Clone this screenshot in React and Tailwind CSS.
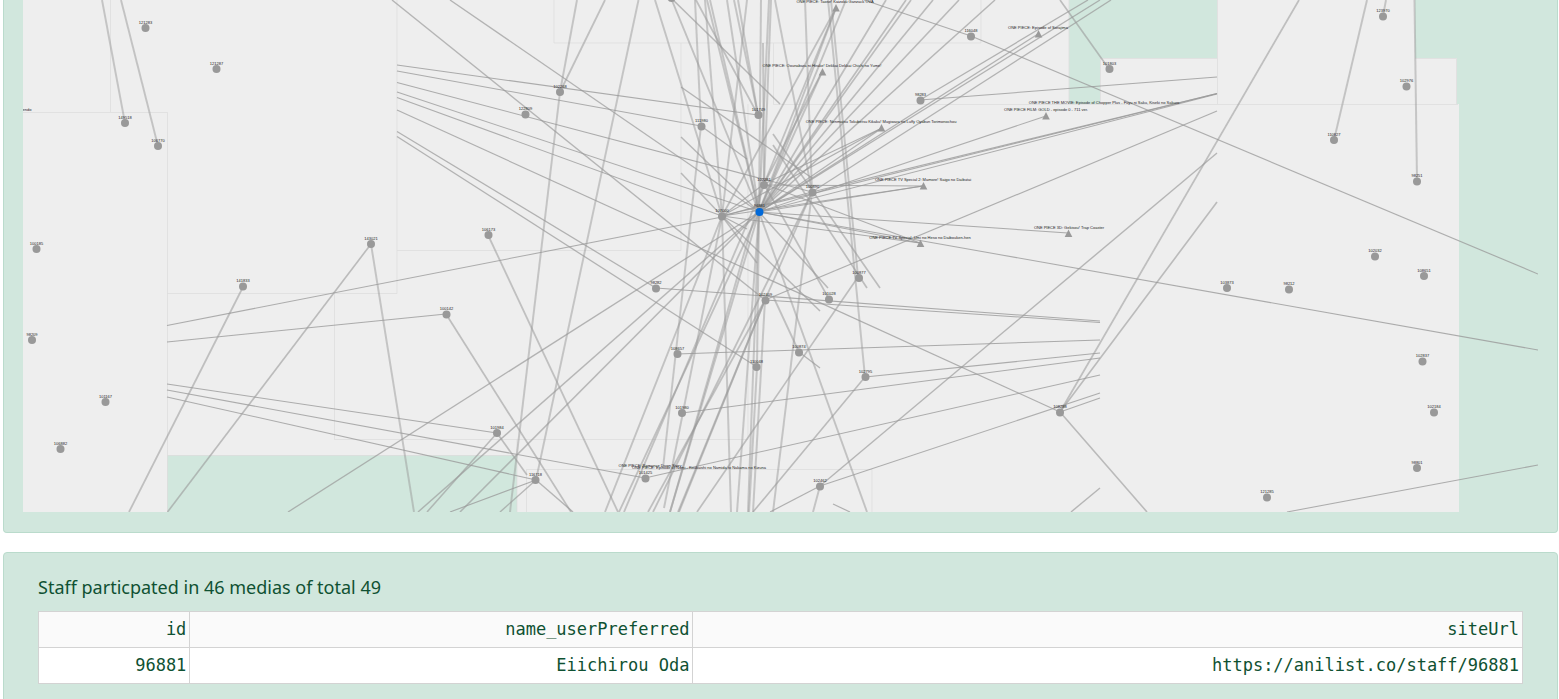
import React from "react";

// Cluster panels: [x, y, width, height]
const areas = [
  [23, 0, 1046, 455],
  [23, 112, 144, 400],
  [517, 439, 942, 73],
  [1100, 58, 357, 60],
  [1217, 0, 198, 105],
  [773, 104, 686, 408],
];

const outlines = [
  "M110.5 0V112", "M23 112.5H167.5V512", "M397 0V293.5H167", "M397 250.5H681V43",
  "M554 0V43H981V0", "M334.5 293V439.5H748V104", "M517 439V512", "M167 455.5H517",
  "M526.5 512V469.5H872V512", "M773.5 43V104.5H1458", "M1217.5 0V104", "M1100 58.5H1217",
  "M1415 58.5H1456.5V104", "M1069 0V104", "M1100.5 58V104",
];

const edges = [
  [102, 0, 125, 123], [121, 0, 158, 146],
  [392, 0, 765, 300], [450, 0, 759, 212],
  [397, 65, 758, 115], [397, 71, 701, 126], [397, 82.5, 812, 192], [397, 92, 759, 212],
  [397, 97.5, 722, 216], [397, 110, 1060, 412], [397, 131.5, 656, 288], [397, 136.5, 757, 367],
  [577, 0, 560, 92], [605, 0, 560, 92], [560, 92, 510, 512], [638.5, 0, 536, 480],
  [655, 0, 722, 216], [671, -2, 780, 104], [671, -2, 759, 212], [488, 235, 618, 512],
  [167, 325.5, 722, 217], [773, 134, 880, 288], [773, 145, 867, 288],
  [681, 87, 812, 178], [681, 137, 759, 212], [681, 173, 722, 216],
  [701, 126, 747, 159], [722, 216, 747, 229], [722, 216, 820, 311], [759, 212, 828, 288],
  [722, 216, 757, 263], [759, 212, 867, 512], [773, 296, 799, 352], [799, 352, 820, 368],
  [764, 184, 829, 299], [812, 192, 773, 512], [828, 0, 865, 377], [831, 0, 858, 277],
  [775, 0, 812, 192], [805, 0, 812, 192], [771, 0, 764, 184], [769, 0, 759, 212],
  [761, 0, 759, 212], [763, 43, 764, 184], [695, 0, 701, 126], [696, 0, 758, 115],
  [705, 0, 722, 216], [707, 0, 759, 212], [710, 0, 759, 212], [727, 0, 759, 212],
  [734, 0, 758, 115], [738, 0, 758, 115], [747, 0, 722, 216], [701, 126, 663, 468],
  [836, 8, 759, 212], [836, 8, 722, 216], [836, 8, 764, 184], [822, 72, 759, 212],
  [822, 72, 764, 184], [846, 0, 759, 212], [886, 0, 759, 212], [906, 0, 759, 212],
  [911, 0, 759, 212], [933, 0, 759, 212], [959, 0, 759, 212], [995, 0, 759, 212],
  [1088, 0, 920, 100], [1100, 0, 759, 212], [1111, 0, 812, 192], [1038, 34, 759, 212],
  [882, 128, 759, 212], [882, 128, 722, 216], [882, 128, 764, 184],
  [923, 186, 764, 185], [923, 186, 759, 212], [923, 186, 722, 216],
  [920, 243, 759, 212], [920, 243, 764, 184], [920, 243, 722, 216],
  [1068, 233, 759, 212], [1046, 116, 759, 212],
  [1217, 94, 759, 212], [1217, 93.5, 722, 216], [1217, 93.5, 812, 192],
  [1217, 111, 765, 300], [1217, 77, 920, 100], [1217, 153, 820, 486],
  [1217, 202, 1060, 412], [1299, 0, 1060, 412], [864, 0, 971, 36], [971, 36, 1538, 274],
  [1060, 0, 1109, 69], [759, 212, 1538, 350],
  [1367, 0, 1334, 140], [1414.5, 0, 1417, 181], [1386, 0, 1383, 16],
  [1287, 512, 1538, 465], [1100, 321, 656, 288], [1100, 322.5, 765, 300],
  [1100, 340, 677, 354], [1100, 353, 865, 377], [1100, 358, 682, 413],
  [1100, 375, 645, 478], [1100, 393, 820, 486], [1100, 398, 1060, 412],
  [1100, 488, 1071, 512], [1060, 412, 1147, 512],
  [243, 287, 129, 512], [371, 244, 167.5, 512], [371, 244, 414, 512],
  [167, 342, 446, 314], [167, 384, 497, 433], [167, 390, 645, 478], [167, 397, 536, 480],
  [288, 512, 759, 212], [418, 512, 759, 212], [427, 512, 497, 433], [450, 512, 536, 480],
  [460, 512, 759, 212], [500, 512, 536, 480], [536, 480, 573, 512], [446, 314, 571, 512],
  [497, 433, 527, 475], [605, 512, 722, 216], [619, 512, 759, 212], [624, 512, 764, 184],
  [648, 512, 765, 300], [653, 512, 812, 192], [664, 508, 722, 216], [670, 512, 759, 212],
  [670, 512, 764, 184], [678, 512, 765, 300], [679, 512, 765, 300], [812, 192, 765, 300],
  [697, 512, 858, 277], [753, 512, 865, 377], [770, 512, 820, 486], [813, 512, 820, 486],
  [833, 504, 850, 512], [722, 216, 731, 512], [759, 212, 737, 512], [759, 212, 748, 512],
  [757, 367, 749, 512], [765, 300, 753, 512], [759, 212, 757, 367],
  [722, 216, 764, 184], [722, 216, 812, 192],
];

const nodes = [
  [145.5, 28, "121283"], [216.5, 69, "121287"], [125, 123, "149518"], [158, 146, "106770"],
  [36.5, 249, "100185"], [371, 244, "143021"], [243, 286.5, "141833"], [32, 340, "98209"],
  [105.5, 402, "101167"], [60.5, 449, "106882"], [560, 92, "102268"], [525.5, 114.5, "122809"],
  [488.5, 235, "106173"], [671.5, -2, ""], [446.5, 314.5, "100142"], [656, 288.5, "98282"],
  [497, 433, "101984"], [535.5, 480, "116718"], [645.5, 478.5, "101425"], [677.5, 354, "108657"],
  [682, 413, "101980"], [758.5, 115, "101749"], [701.5, 126.5, "111980"], [764, 185, "102281"],
  [812.5, 192.5, "100890"], [722, 216.5, "107000"], [765.5, 300.5, "102409"],
  [829, 299.5, "101028"], [859, 278, "100877"], [799, 352.5, "100874"], [756.5, 367, "110048"],
  [865.5, 377, "102795"], [820, 486.5, "102462"], [971, 36.5, "116048"], [920.5, 100.5, "98283"],
  [1109.5, 69, "101803"], [1060, 412.5, "108288"], [1383, 16.5, "123970"],
  [1406.5, 86.5, "102976"], [1334, 140, "110827"], [1417, 181.5, "98251"],
  [1375, 256.5, "102032"], [1424, 276, "108651"], [1227, 288, "103873"], [1289, 289.5, "98212"],
  [1422.5, 361.5, "102837"], [1434, 412.5, "102184"], [1417, 468, "98801"], [1267, 497.5, "121285"],
];

// Anime titles: [x, y, label, label center]
const titles = [
  [836, 8, "ONE PIECE: Taose! Kaizoku Ganzack OVA", 835],
  [822.5, 72, "ONE PIECE: Oounabara ni Hirake! Dekkai Dekkai Chichi no Yume!", 822],
  [881.5, 128, "ONE PIECE: Nenmatsu Tokubetsu Kikaku! Mugiwara no Luffy Oyabun Torimonochou", 881],
  [1038.5, 34, "ONE PIECE: Episode of Sorajima", 1038],
  [1046, 116, "ONE PIECE FILM: GOLD - episode 0 - 711 ver.", 1046],
  [923.5, 186, "ONE PIECE TV Special 2: Mamore! Saigo no Daibutai", 923],
  [920.5, 243.5, "ONE PIECE TV Special: Umi no Heso no Daibouken-hen", 920],
  [1068.5, 233.5, "ONE PIECE 3D: Gekisou! Trap Coaster", 1069],
];

const looseLabels = [
  [1104, 104, "ONE PIECE THE MOVIE: Episode of Chopper Plus - Fuyu ni Saku, Kiseki no Sakura"],
  [699, 469, "ONE PIECE: Episode of Nami - Koukaishi no Namida to Nakama no Kizuna"],
  [650, 467, "ONE PIECE: Romance Dawn Story"],
  [27, 111, "endo"],
];

function Edge({ line }) {
  const [x1, y1, x2, y2] = line;
  const steep = Math.abs(y2 - y1) / Math.hypot(x2 - x1, y2 - y1);
  return (
    <line
      x1={x1} y1={y1} x2={x2} y2={y2}
      stroke="#999"
      strokeWidth={1 + steep * steep}
      strokeOpacity={0.8 - 0.32 * steep * steep}
    />
  );
}

function Network() {
  return (
    <svg viewBox="23 0 1515 512" className="block h-auto w-full" role="img" aria-label="Staff and media network">
      {areas.map(([x, y, w, h], i) => (
        <rect key={i} x={x} y={y} width={w} height={h} fill="#eee" />
      ))}
      <path d={outlines.join("")} fill="none" stroke="#ddd" strokeOpacity="0.8" />
      {edges.map((line, i) => <Edge key={i} line={line} />)}
      {nodes.map(([x, y], i) => <circle key={i} cx={x} cy={y} r="4" fill="#999" />)}
      {titles.map(([x, y], i) => (
        <path key={i} d={`M${x} ${y - 4}l3.8 7.5h-7.6z`} fill="#999" />
      ))}
      <circle cx="759.5" cy="212" r="4" fill="#0169d9" />
      <g className="font-['Liberation_Sans',sans-serif] text-[4px]" fill="#222" textAnchor="middle">
        {nodes.map(([x, y, label], i) => <text key={i} x={x} y={y - 4.5}>{label}</text>)}
        {titles.map(([, y, label, cx], i) => <text key={i} x={cx} y={y - 5}>{label}</text>)}
        {looseLabels.map(([x, y, label]) => <text key={label} x={x} y={y}>{label}</text>)}
        <text x="759.5" y="207">96881</text>
      </g>
    </svg>
  );
}

const columns = ["id", "name_userPreferred", "siteUrl"];
const rows = [["96881", "Eiichirou Oda", "https://anilist.co/staff/96881"]];

export default function App() {
  return (
    <main className="h-screen overflow-hidden bg-white pl-[3px] pr-px text-[#0f5132]">
      <section className="rounded-b border border-t-0 border-[#badbcc] bg-[#d1e7dd] px-[19px] pb-5">
        <Network />
      </section>
      <section className="mt-[19px] rounded border border-[#badbcc] bg-[#d1e7dd] px-[34px] pt-[19px] pb-8">
        <h2 className="mb-[9px] font-['Noto_Sans','Open_Sans',sans-serif] text-[18px] leading-[30px]">
          Staff particpated in 46 medias of total 49
        </h2>
        <table className="w-full table-fixed border-collapse bg-white text-right font-['DejaVu_Sans_Mono',monospace] text-[17px] leading-[35px]">
          <colgroup>
            <col className="w-[10.2%]" />
            <col className="w-[33.9%]" />
            <col />
          </colgroup>
          <thead className="bg-[#fafafa]">
            <tr>
              {columns.map((name) => (
                <th key={name} scope="col" className="border border-[#d3d3d3] px-[3px] font-normal">{name}</th>
              ))}
            </tr>
          </thead>
          <tbody>
            {rows.map((row) => (
              <tr key={row[0]}>
                {row.map((value) => (
                  <td key={value} className="border border-[#d3d3d3] px-[3px]">{value}</td>
                ))}
              </tr>
            ))}
          </tbody>
        </table>
      </section>
    </main>
  );
}
